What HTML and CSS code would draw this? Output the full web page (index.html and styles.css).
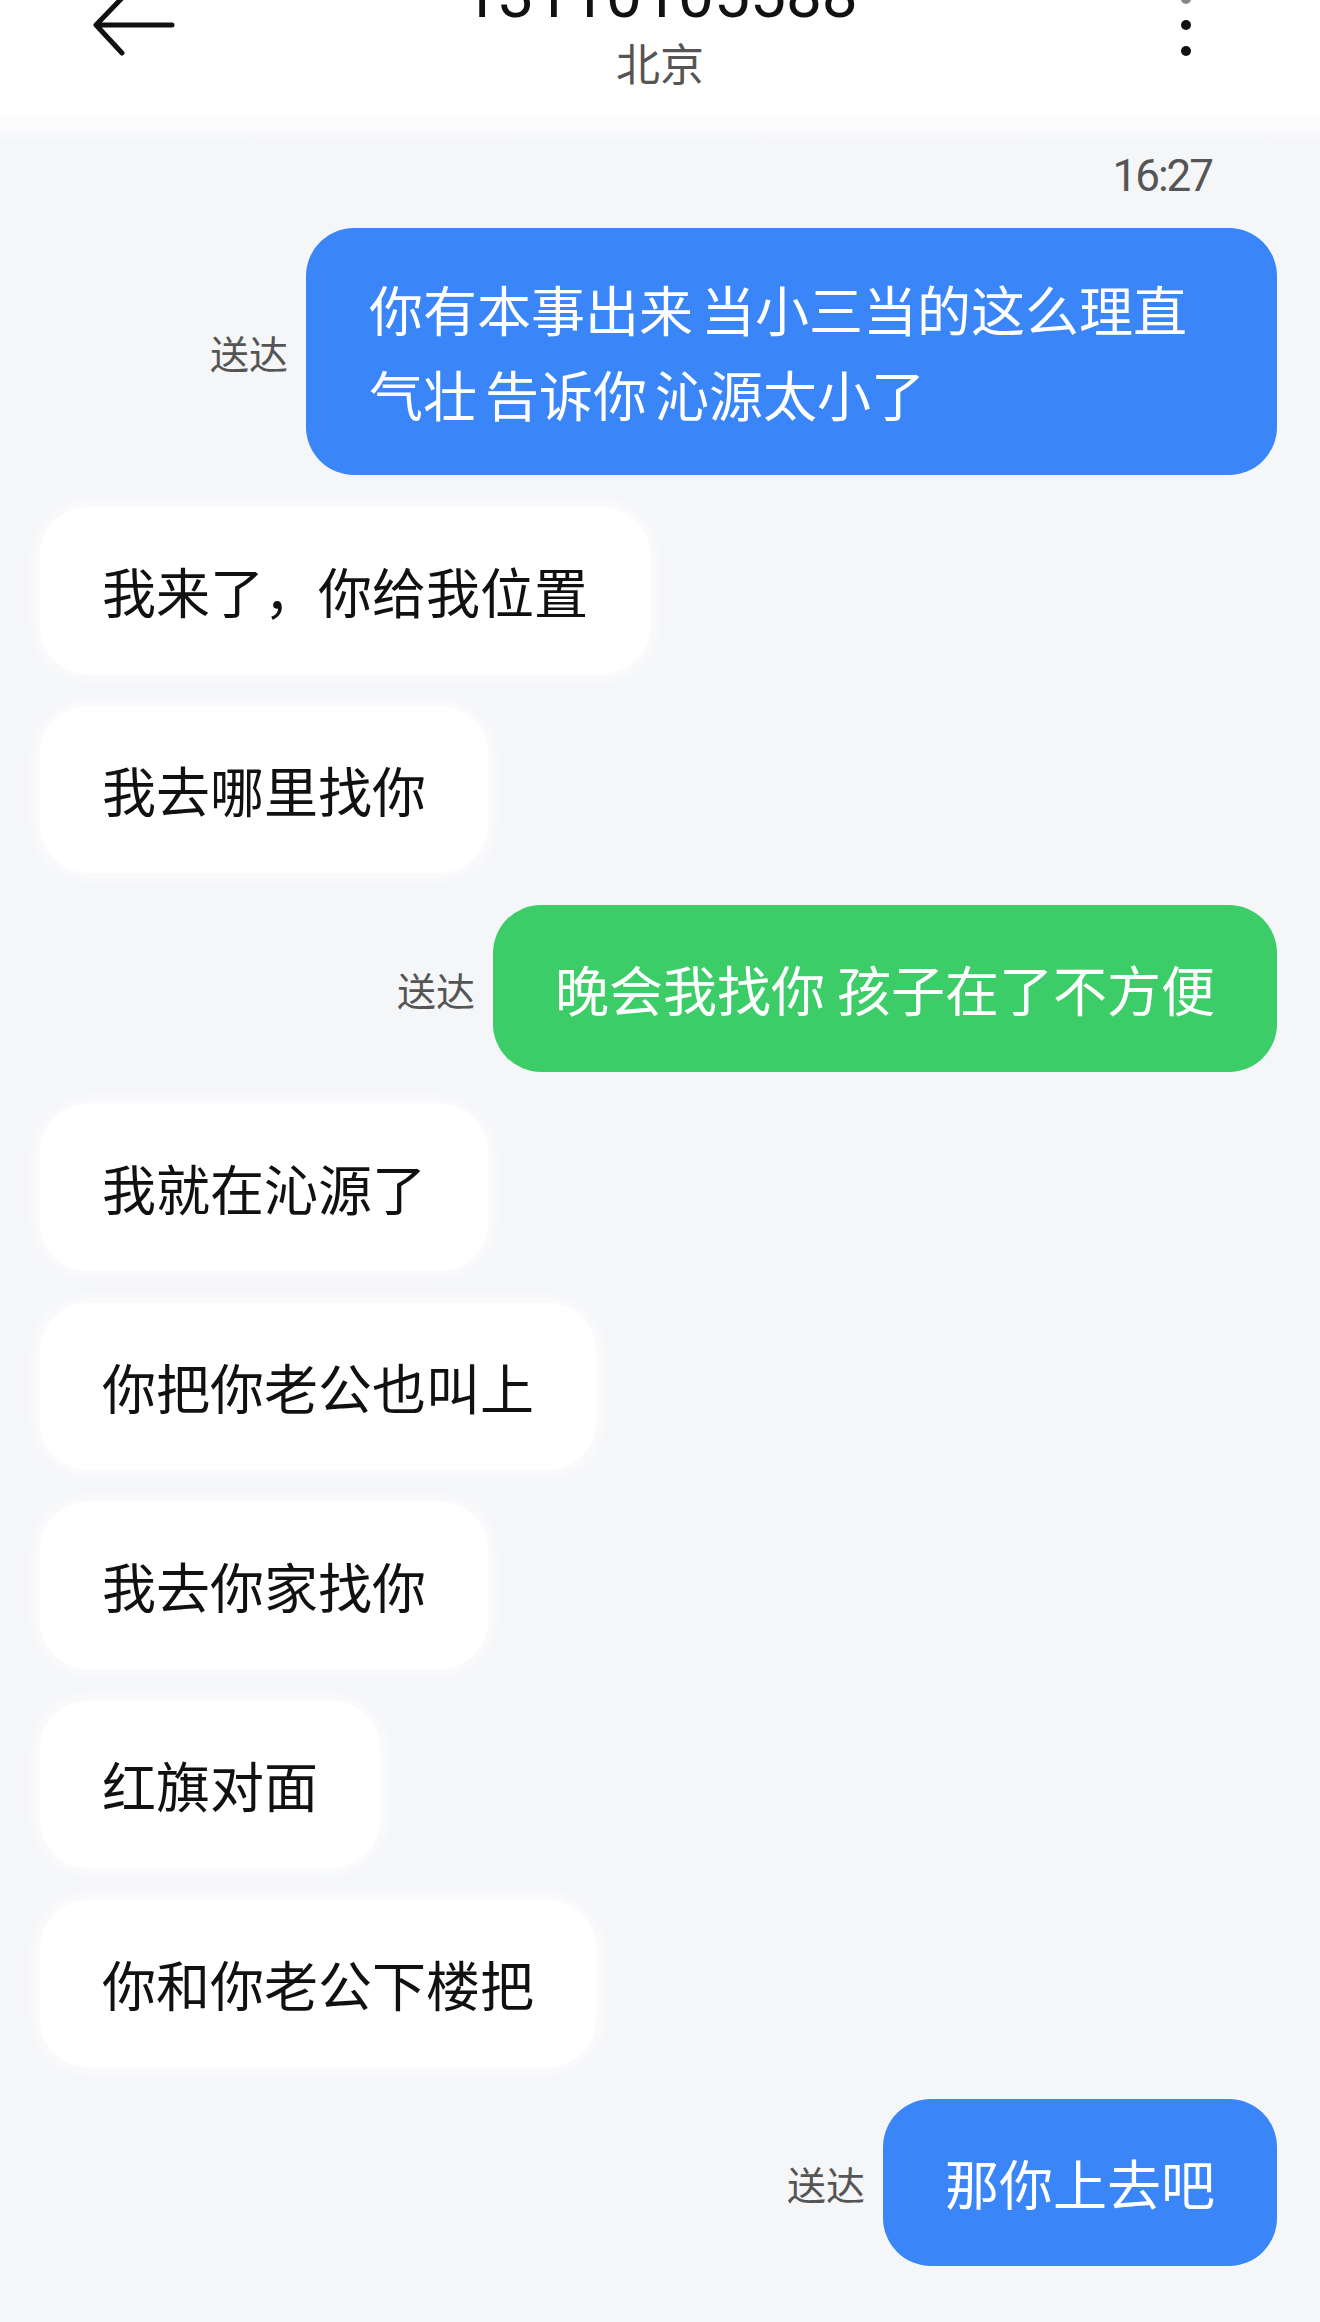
FILE: index.html
```html
<!DOCTYPE html>
<html lang="zh-CN">
<head>
    <meta charset="UTF-8">
    <meta name="viewport" content="width=device-width, initial-scale=1.0">
    <title>短信</title>
    <link rel="stylesheet" href="styles.css">
</head>
<body>
    <header class="topbar">
        <svg class="back" width="100" height="60" viewBox="0 0 100 60">
            <path d="M84 25 H9 M35 -3 L8 25 L34 53" fill="none" stroke="#111" stroke-width="5" stroke-linecap="round" stroke-linejoin="round"/>
        </svg>
        <div class="title">
            <div class="number">13110105588</div>
            <div class="city">北京</div>
        </div>
        <svg class="more" width="20" height="60" viewBox="0 0 20 60">
            <circle cx="10" cy="-1" r="5" fill="#888"/>
            <circle cx="10" cy="25" r="5" fill="#111"/>
            <circle cx="10" cy="51" r="5" fill="#111"/>
        </svg>
    </header>

    <div class="time">16:27</div>

    <div class="messages">
        <div class="row out">
            <span class="status">送达</span>
            <div class="bubble blue long">你有本事出来 当小三当的这么理直<br>气壮 告诉你 沁源太小了</div>
        </div>
        <div class="row in">
            <div class="bubble white">我来了，你给我位置</div>
        </div>
        <div class="row in">
            <div class="bubble white">我去哪里找你</div>
        </div>
        <div class="row out">
            <span class="status">送达</span>
            <div class="bubble green">晚会我找你 孩子在了不方便</div>
        </div>
        <div class="row in">
            <div class="bubble white">我就在沁源了</div>
        </div>
        <div class="row in">
            <div class="bubble white">你把你老公也叫上</div>
        </div>
        <div class="row in">
            <div class="bubble white">我去你家找你</div>
        </div>
        <div class="row in">
            <div class="bubble white">红旗对面</div>
        </div>
        <div class="row in">
            <div class="bubble white">你和你老公下楼把</div>
        </div>
        <div class="row out">
            <span class="status">送达</span>
            <div class="bubble blue">那你上去吧</div>
        </div>
    </div>
</body>
</html>
```

FILE: styles.css
```css
body {
    margin: 0;
    font-family: "Noto Sans CJK SC", "Noto Sans", sans-serif;
    color: #111;
    background-color: #f5f6f8;
    background-image: linear-gradient(to bottom, #fff 0, #fff 110px, #f5f6f8 145px);
    background-repeat: no-repeat;
    min-height: 2322px;
    overflow: hidden;
}

/* 顶部栏 */
.topbar {
    display: grid;
    grid-template-columns: 1fr auto 1fr;
    align-items: start;
    height: 130px;
}

.back {
    margin-left: 88px;
}

.more {
    justify-self: end;
    margin-right: 124px;
}

.title {
    text-align: center;
}

.number {
    font-family: Roboto, "Liberation Sans", sans-serif;
    font-size: 64px;
    line-height: 64px;
    margin-top: -36px;
    color: #111;
}

.city {
    font-size: 44px;
    line-height: 52px;
    margin-top: 8px;
    color: #555;
}

.time {
    font-family: Roboto, "Liberation Sans", sans-serif;
    font-size: 44px;
    line-height: 44px;
    letter-spacing: -2px;
    text-align: right;
    color: #555;
    margin: 24px 108px 30px 0;
}

/* 消息列表 */
.messages {
    display: flex;
    flex-direction: column;
    gap: 32px;
    padding: 0 43px 0 40px;
}

.row {
    display: flex;
    align-items: center;
    gap: 18px;
}

.row.out {
    justify-content: flex-end;
}

.status {
    font-size: 39px;
    color: #555;
}

.bubble {
    font-size: 54px;
    line-height: 75px;
    padding: 46px 62px;
    border-radius: 48px;
    white-space: nowrap;
}

.bubble.white {
    background: #fff;
    color: #111;
    box-shadow: 0 0 14px 6px rgba(255, 255, 255, 0.6);
}

.bubble.blue {
    background: #3a85f8;
    color: #fff;
}

.bubble.green {
    background: #3dcd68;
    color: #fff;
}

.bubble.long {
    line-height: 85px;
    padding: 38px 90px 39px 63px;
    word-spacing: -4px;
}
```
